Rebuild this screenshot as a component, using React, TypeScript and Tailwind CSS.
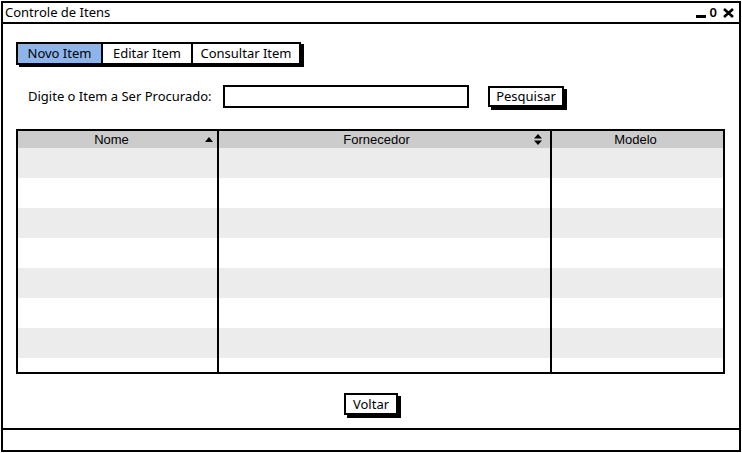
import React from "react";

const hand = "font-['Noto_Sans','Open_Sans',sans-serif]";

function SortUp() {
  return (
    <svg width="8" height="5" viewBox="0 0 8 5" className="shrink-0">
      <path d="M0 5 L4 0 L8 5 Z" fill="#000" />
    </svg>
  );
}

function SortBoth() {
  return (
    <svg width="8" height="11" viewBox="0 0 8 11" className="shrink-0">
      <path d="M0 4.5 L4 0 L8 4.5 Z" fill="#000" />
      <path d="M0 6.5 L4 11 L8 6.5 Z" fill="#000" />
    </svg>
  );
}

const rows = [0, 1, 2, 3, 4, 5, 6, 7];

export default function App() {
  return (
    <div className="h-[453px] w-[742px] overflow-hidden bg-white">
      {/* janela */}
      <div className="ml-px mt-px flex h-[451px] w-[740px] flex-col border-2 border-black">
        {/* barra de título */}
        <div className="flex h-[21px] shrink-0 items-center justify-between border-b-2 border-black pl-[2px] pr-[5px]">
          <span className={`${hand} text-[13px] text-black`}>Controle de Itens</span>
          <div className="flex items-center gap-[4px]">
            <div className="mt-[8px] h-[3px] w-[10px] bg-black" />
            <span className={`${hand} text-[13px] font-semibold leading-none`}>0</span>
            <svg width="11" height="10" viewBox="0 0 11 10" className="ml-[2px]">
              <path d="M1 1 L10 9 M10 1 L1 9" stroke="#000" strokeWidth="2.6" />
            </svg>
          </div>
        </div>

        {/* conteúdo */}
        <div className="flex flex-1 flex-col pt-[18px]">
          {/* abas */}
          <div className="ml-[13px] flex h-[23px] w-[285px] border-2 border-black shadow-[3px_2px_0_0_#000]">
            <div className={`${hand} flex w-[83px] items-center justify-center bg-[#8fb4ea] text-[13px]`}>
              Novo Item
            </div>
            <div className={`${hand} flex w-[90px] items-center justify-center border-l-2 border-black text-[13px]`}>
              Editar Item
            </div>
            <div className={`${hand} flex flex-1 items-center justify-center border-l-2 border-black text-[13px]`}>
              Consultar Item
            </div>
          </div>

          {/* pesquisa */}
          <div className="mt-[20px] flex items-center">
            <span className={`${hand} ml-[25px] w-[195px] text-[13px]`}>Digite o Item a Ser Procurado:</span>
            <div className="h-[23px] w-[246px] border-2 border-black bg-white" />
            <button
              className={`${hand} ml-[19px] h-[21px] w-[76px] border-2 border-black bg-white text-[13px] leading-none shadow-[3px_3px_0_0_#000]`}
            >
              Pesquisar
            </button>
          </div>

          {/* tabela */}
          <div className="ml-[13px] mt-[21px] flex h-[245px] w-[709px] flex-col overflow-hidden border-2 border-black">
            <div className="flex h-[17px] shrink-0 bg-[#cccccc] font-['Liberation_Sans',sans-serif] text-[13px]">
              <div className="relative flex w-[199px] items-center justify-center pr-[12px]">
                Nome
                <span className="absolute right-[4px] top-[6px]">
                  <SortUp />
                </span>
              </div>
              <div className="relative flex w-[333px] items-center justify-center border-l-2 border-black pr-[16px]">
                Fornecedor
                <span className="absolute right-[8px] top-[3px]">
                  <SortBoth />
                </span>
              </div>
              <div className="flex flex-1 items-center justify-center border-l-2 border-black pr-[4px]">Modelo</div>
            </div>
            <div className="flex flex-1 overflow-hidden">
              <div className="flex w-[199px] flex-col">
                {rows.map((r) => (
                  <div key={r} className={`h-[30px] shrink-0 ${r % 2 === 0 ? "bg-[#ececec]" : "bg-white"}`} />
                ))}
              </div>
              <div className="flex w-[333px] flex-col border-l-2 border-black">
                {rows.map((r) => (
                  <div key={r} className={`h-[30px] shrink-0 ${r % 2 === 0 ? "bg-[#ececec]" : "bg-white"}`} />
                ))}
              </div>
              <div className="flex flex-1 flex-col border-l-2 border-black">
                {rows.map((r) => (
                  <div key={r} className={`h-[30px] shrink-0 ${r % 2 === 0 ? "bg-[#ececec]" : "bg-white"}`} />
                ))}
              </div>
            </div>
          </div>

          {/* voltar */}
          <div className="mt-[19px] flex justify-center">
            <button
              className={`${hand} h-[22px] w-[54px] border-2 border-black bg-white text-[13px] leading-none shadow-[3px_3px_0_0_#000]`}
            >
              Voltar
            </button>
          </div>
        </div>

        {/* barra de status */}
        <div className="h-[22px] shrink-0 border-t-2 border-black" />
      </div>
    </div>
  );
}
